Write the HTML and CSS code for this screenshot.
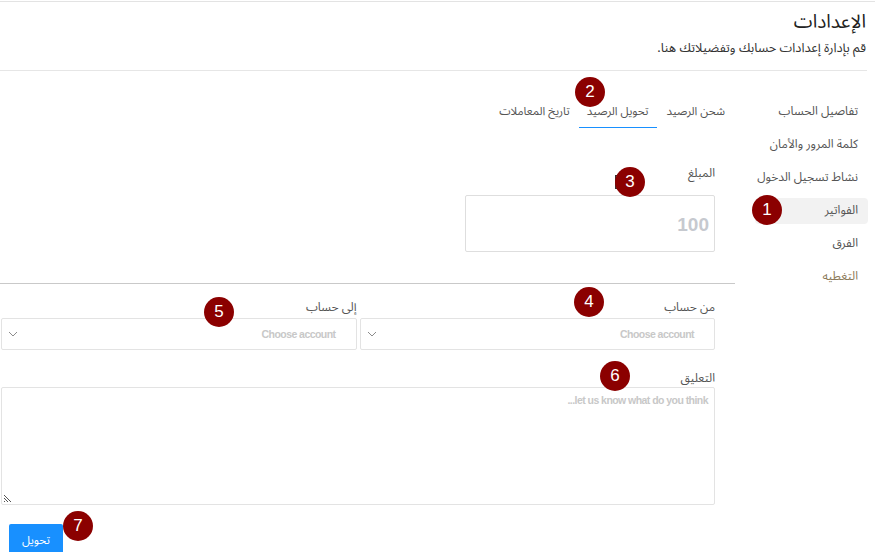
FILE: index.html
```html
<!DOCTYPE html>
<html lang="ar" dir="rtl">
<head>
<meta charset="utf-8">
<link rel="stylesheet" href="styles.css">
</head>
<body>
<div class="page">
  <header class="header">
    <h1 class="title">الإعدادات</h1>
    <p class="subtitle">قم بإدارة إعدادات حسابك وتفضيلاتك هنا.</p>
  </header>
  <div class="main">
    <nav class="sidebar">
      <div class="side-item">تفاصيل الحساب</div>
      <div class="side-item">كلمة المرور والأمان</div>
      <div class="side-item">نشاط تسجيل الدخول</div>
      <div class="side-item active">الفواتير</div>
      <div class="side-item">الفرق</div>
      <div class="side-item muted">التغطيه</div>
    </nav>
    <section class="content">
      <div class="tabs">
        <div class="tab">شحن الرصيد</div>
        <div class="tab active">تحويل الرصيد</div>
        <div class="tab">تاريخ المعاملات</div>
      </div>
      <div class="form">
        <label class="label">المبلغ</label>
        <div class="amount-input"><span class="amount-ph">100</span></div>
      </div>
      <hr class="divider">
      <div class="form">
        <div class="row">
          <div class="field">
            <label class="label">من حساب</label>
            <div class="select"><span class="ph">Choose account</span><svg class="chev" width="10" height="6" viewBox="0 0 10 6"><path d="M1 1l4 4 4-4" fill="none" stroke="#8c8c8c" stroke-width="1"/></svg></div>
          </div>
          <div class="field">
            <label class="label">إلى حساب</label>
            <div class="select"><span class="ph">Choose account</span><svg class="chev" width="10" height="6" viewBox="0 0 10 6"><path d="M1 1l4 4 4-4" fill="none" stroke="#8c8c8c" stroke-width="1"/></svg></div>
          </div>
        </div>
        <label class="label comment-label">التعليق</label>
        <div class="textarea"><span class="ph ph-area">...let us know what do you think</span><svg class="grip" width="8" height="8" viewBox="0 0 8 8"><path d="M0 1l7 7M0 4l4 4M0 7l1 1" stroke="#555" stroke-width="1"/></svg></div>
        <div class="actions"><button class="btn">تحويل</button></div>
      </div>
    </section>
  </div>
</div>
<span class="caret"></span>
<span class="badge b1">1</span>
<span class="badge b2">2</span>
<span class="badge b3">3</span>
<span class="badge b4">4</span>
<span class="badge b5">5</span>
<span class="badge b6">6</span>
<span class="badge b7">7</span>
</body>
</html>
```
FILE: styles.css
```css
* { box-sizing: border-box; }
html, body { margin: 0; padding: 0; }
body {
  width: 875px;
  height: 552px;
  overflow: hidden;
  background: #fff;
  font-family: "Noto Sans Arabic", "DejaVu Sans", "Noto Sans", sans-serif;
  color: #555;
  position: relative;
}
.page { border-top: 1px solid #e3e3e3; margin-top: 1px; }
.header {
  margin-right: 8px;
  padding: 7px 1px 0 0;
  height: 69px;
  border-bottom: 1px solid #e6e6e6;
}
.title {
  margin: 0;
  font-size: 19px;
  font-weight: normal;
  color: #222;
  line-height: 26px;
}
.subtitle {
  margin: 4px 0 0;
  font-size: 12.8px;
  color: #333;
  line-height: 18px;
}
.main { display: flex; gap: 17px; }
.sidebar {
  width: 116px;
  margin-right: 7px;
  padding-top: 28px;
  flex: none;
}
.side-item {
  height: 26px;
  line-height: 26px;
  margin-bottom: 7px;
  padding-right: 10px;
  font-size: 12px;
  color: #555;
  border-radius: 4px;
  white-space: nowrap;
}
.side-item.active { background: #f2f2f2; margin-left: 3px; }
.side-item.muted { color: #8c7a5a; }
.content { width: 735px; flex: none; }
.tabs {
  display: flex;
  padding-right: 10px;
  padding-top: 27px;
  height: 57px;
}
.tab {
  font-size: 11.5px;
  color: #555;
  padding: 0 8px;
  height: 30px;
  line-height: 26px;
  white-space: nowrap;
}
.tab:first-child { padding: 0 0 0 10px; }
.tab.active { border-bottom: 1.5px solid #1890ff; padding: 0 8px; margin-left: 1px; }
.form { padding: 0 20px 0 0; }
.label {
  display: block;
  font-size: 12px;
  color: #555;
  line-height: 18px;
}
.form > .label:first-child { margin-top: 37px; }
.amount-input {
  margin-top: 12px;
  width: 250px;
  height: 57px;
  border: 1px solid #dedede;
  border-radius: 2px;
  display: flex;
  align-items: center;
  padding-right: 5px;
}
.amount-ph {
  font-family: "Liberation Sans", Arial, sans-serif;
  font-size: 19px;
  font-weight: bold;
  color: #c6c9cf;
  padding-top: 2px;
}
.divider {
  margin: 31px 0 0 0;
  border: 0;
  border-top: 1px solid #c9c9c9;
  height: 0;
}
.row { display: flex; gap: 3px; padding-top: 15px; margin-left: 1px; }
.field { flex: 1; }
.field .label { margin-bottom: 1px; }
.select {
  height: 32px;
  border: 1px solid #e3e3e3;
  border-radius: 2px;
  display: flex;
  align-items: center;
  justify-content: space-between;
  padding: 0 20px 0 6px;
}
.ph {
  font-family: "Liberation Sans", Arial, sans-serif;
  font-size: 10.5px;
  font-weight: bold;
  color: #c8c8c8;
  letter-spacing: -0.55px;
}
.chev { display: block; }
.comment-label { margin-top: 20px; }
.textarea {
  margin-top: -1px;
  margin-left: 1px;
  height: 118px;
  border: 1px solid #e3e3e3;
  border-radius: 2px;
  position: relative;
  padding: 5px 6px 0 0;
  line-height: 12px;
}
.ph-area { direction: ltr; unicode-bidi: bidi-override; display: inline-block; }
.grip { position: absolute; left: 2px; bottom: 2px; }
.actions { display: flex; justify-content: flex-end; margin-top: 19px; margin-left: 9px; }
.btn {
  width: 54px;
  height: 32px;
  border: 0;
  border-radius: 2px 2px 0 0;
  background: #1890ff;
  color: #fff;
  font-family: inherit;
  font-size: 11.5px;
  padding: 0;
}
.caret {
  position: absolute;
  left: 615px;
  top: 175px;
  width: 3px;
  height: 14px;
  border: 1px solid #333;
  border-right: 0;
}
.badge {
  position: absolute;
  width: 30px;
  height: 30px;
  border-radius: 50%;
  background: #8b0000;
  color: #fff;
  font-family: "Liberation Sans", Arial, sans-serif;
  font-size: 17px;
  line-height: 30px;
  text-align: center;
}
.b1 { left: 752px; top: 195px; }
.b2 { left: 575px; top: 77px; }
.b3 { left: 615px; top: 167px; }
.b4 { left: 574px; top: 287px; }
.b5 { left: 204px; top: 297px; }
.b6 { left: 600px; top: 361px; }
.b7 { left: 63px; top: 511px; }
```
